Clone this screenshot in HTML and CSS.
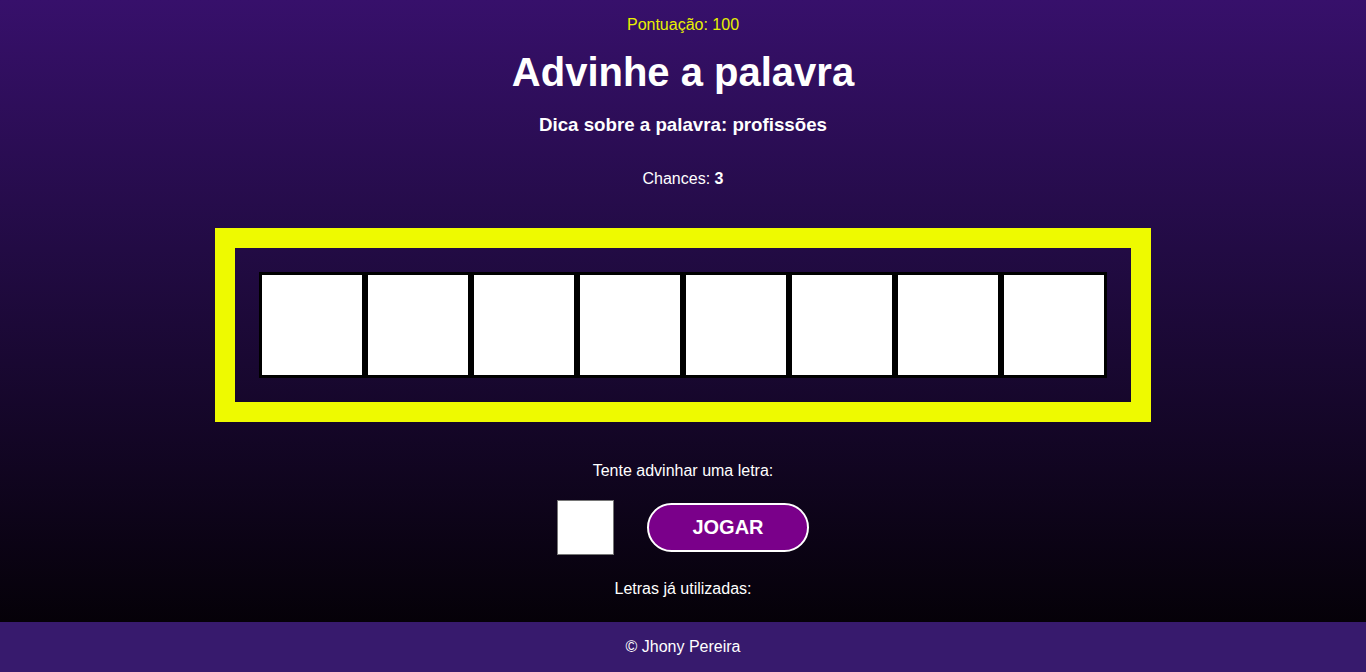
FILE: index.html
```html
<!DOCTYPE html>
<html lang="pt-BR">
<head>
<meta charset="utf-8">
<title>Advinhe a palavra</title>
<link rel="stylesheet" href="styles.css">
</head>
<body>
<main class="game">
  <p class="score">Pontuação: 100</p>
  <h1 class="title">Advinhe a palavra</h1>
  <h2 class="hint">Dica sobre a palavra: profissões</h2>
  <p class="chances">Chances: <strong>3</strong></p>
  <section class="board">
    <div class="word">
      <div class="letter"></div>
      <div class="letter"></div>
      <div class="letter"></div>
      <div class="letter"></div>
      <div class="letter"></div>
      <div class="letter"></div>
      <div class="letter"></div>
      <div class="letter"></div>
    </div>
  </section>
  <p class="prompt">Tente advinhar uma letra:</p>
  <form class="guess">
    <input class="guess-input" type="text" maxlength="1">
    <button class="play" type="button">JOGAR</button>
  </form>
  <p class="used">Letras já utilizadas:</p>
</main>
<footer class="footer">© Jhony Pereira</footer>
</body>
</html>
```

FILE: styles.css
```css
* { box-sizing: border-box; }
html, body { margin: 0; padding: 0; }
body {
  font-family: "Liberation Sans", Arial, sans-serif;
  color: #ffffff;
  background: #050109;
}
.game {
  height: 622px;
  display: flex;
  flex-direction: column;
  align-items: center;
  background: linear-gradient(to bottom, #37106b 0%, #220b44 40%, #050108 100%);
  padding-top: 16px;
}
.score {
  margin: 0;
  font-size: 16px;
  line-height: 18px;
  color: #e8f000;
}
.title {
  margin: 15px 0 0;
  font-size: 40px;
  line-height: 46px;
  font-weight: bold;
}
.hint {
  margin: 19px 0 0;
  font-size: 18.72px;
  line-height: 22px;
  font-weight: bold;
}
.chances {
  margin: 34px 0 0;
  font-size: 16px;
  line-height: 18px;
}
.board {
  margin-top: 40px;
  width: 936px;
  border: 20px solid #eefa00;
  padding: 24px;
  display: flex;
  justify-content: center;
}
.word {
  display: flex;
}
.letter {
  width: 106px;
  height: 106px;
  background: #ffffff;
  border: 3px solid #000000;
}
.prompt {
  margin: 40px 0 0;
  font-size: 16px;
  line-height: 18px;
}
.guess {
  margin-top: 20px;
  display: flex;
  align-items: center;
  gap: 33px;
}
.guess-input {
  width: 57px;
  height: 55px;
  border: 1px solid #767676;
  background: #ffffff;
  margin: 0;
}
.play {
  width: 162px;
  height: 49px;
  border: 2px solid #ffffff;
  border-radius: 25px;
  background: #7a008a;
  color: #ffffff;
  font-family: "Liberation Sans", Arial, sans-serif;
  font-size: 20px;
  font-weight: bold;
}
.used {
  margin: 25px 0 0;
  font-size: 16px;
  line-height: 18px;
}
.footer {
  height: 50px;
  background: #371a6d;
  display: flex;
  align-items: center;
  justify-content: center;
  font-size: 16px;
}
```
